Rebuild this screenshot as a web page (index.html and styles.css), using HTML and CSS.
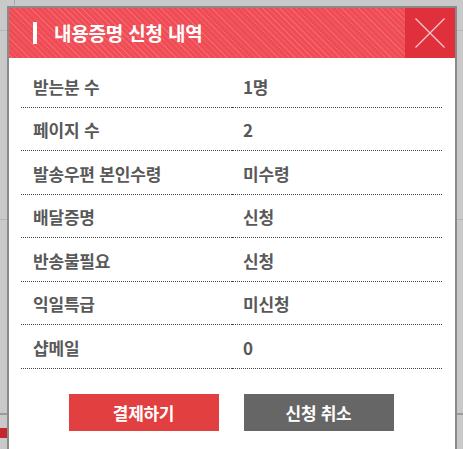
FILE: index.html
```html
<!DOCTYPE html>
<html lang="ko">
<head>
<meta charset="utf-8">
<title>내용증명 신청 내역</title>
<link rel="stylesheet" href="styles.css">
</head>
<body>
<div class="page"></div>
<div class="modal">
  <div class="modal-head">
    <h1 class="modal-title">내용증명 신청 내역</h1>
    <button class="modal-close" type="button" aria-label="닫기">
      <svg width="30" height="30" viewBox="0 0 30 30"><path d="M0.5 0.5 L29.5 29.5 M29.5 0.5 L0.5 29.5" stroke="rgba(255,255,255,0.75)" stroke-width="1.2" fill="none"/></svg>
    </button>
  </div>
  <div class="modal-body">
    <div class="info">
      <div class="row"><div class="cell label">받는분 수</div><div class="cell value">1명</div></div>
      <div class="row"><div class="cell label">페이지 수</div><div class="cell value">2</div></div>
      <div class="row"><div class="cell label">발송우편 본인수령</div><div class="cell value">미수령</div></div>
      <div class="row"><div class="cell label">배달증명</div><div class="cell value">신청</div></div>
      <div class="row"><div class="cell label">반송불필요</div><div class="cell value">신청</div></div>
      <div class="row"><div class="cell label">익일특급</div><div class="cell value">미신청</div></div>
      <div class="row"><div class="cell label">샵메일</div><div class="cell value">0</div></div>
    </div>
    <div class="actions">
      <button class="btn btn-pay" type="button">결제하기</button>
      <button class="btn btn-cancel" type="button">신청 취소</button>
    </div>
  </div>
</div>
</body>
</html>
```
FILE: styles.css
```css
html, body {
  margin: 0;
  padding: 0;
  height: 100%;
  overflow: hidden;
}
body {
  background: #c9c9c9;
  font-family: "Noto Sans CJK KR", "Noto Sans", sans-serif;
}
.page {
  height: 100%;
  background:
    linear-gradient(#b5b5b5, #b5b5b5) 0 219px / 100% 1px no-repeat,
    linear-gradient(#9a9a9a, #9a9a9a) 0 413px / 100% 2px no-repeat,
    linear-gradient(#c4262e, #c4262e) 0 428px / 7px 10px no-repeat,
    linear-gradient(#b9b9b9, #b9b9b9) 0 30px / 100% 1px no-repeat,
    linear-gradient(#a8a8a8, #a8a8a8) 14px 0 / 1px 5px no-repeat,
    #c9c9c9;
}
.modal {
  position: absolute;
  left: 7px;
  top: 6px;
  width: 446px;
  height: 480px;
  border: 2px solid #8a8a8a;
  background: #fff;
}
.modal-head {
  display: flex;
  align-items: center;
  height: 50px;
  background:
    repeating-linear-gradient(45deg, #ef4c55 0 2px, #f2656c 2px 3px, #ef4c55 3px 4px);
}
.modal-title {
  flex: 1;
  margin: 0;
  padding-left: 24px;
  display: flex;
  align-items: center;
  gap: 17px;
  font-size: 19px;
  font-weight: 700;
  color: #fff;
  line-height: 22px;
  letter-spacing: -0.2px;
}
.modal-title::before {
  content: "";
  width: 4px;
  height: 22px;
  background: #fff;
}
.modal-close {
  width: 50px;
  height: 50px;
  border: 0;
  padding: 0;
  margin: 0;
  background: #e0303b;
  display: flex;
  align-items: center;
  justify-content: center;
}
.modal-body {
  padding: 6px 13px 0 12px;
}
.info {
  display: flex;
  flex-direction: column;
}
.row {
  display: flex;
  height: 43.5px;
}
.cell {
  flex: 1;
  box-sizing: border-box;
  border-bottom: 1px dotted #444;
  display: flex;
  align-items: center;
  font-size: 17px;
  font-weight: 700;
  color: #595959;
  letter-spacing: -0.2px;
  padding-top: 2px;
}
.label {
  padding-left: 12px;
}
.value {
  padding-left: 11px;
}
.actions {
  display: flex;
  justify-content: center;
  gap: 25px;
  margin-top: 25px;
  padding-right: 1px;
}
.btn {
  width: 150px;
  height: 37px;
  border: 0;
  padding: 0;
  font-family: "Noto Sans CJK KR", "Noto Sans", sans-serif;
  font-size: 17px;
  font-weight: 700;
  color: #fff;
  letter-spacing: -0.3px;
}
.btn-pay {
  background: #e24040;
}
.btn-cancel {
  background: #666;
}
```
